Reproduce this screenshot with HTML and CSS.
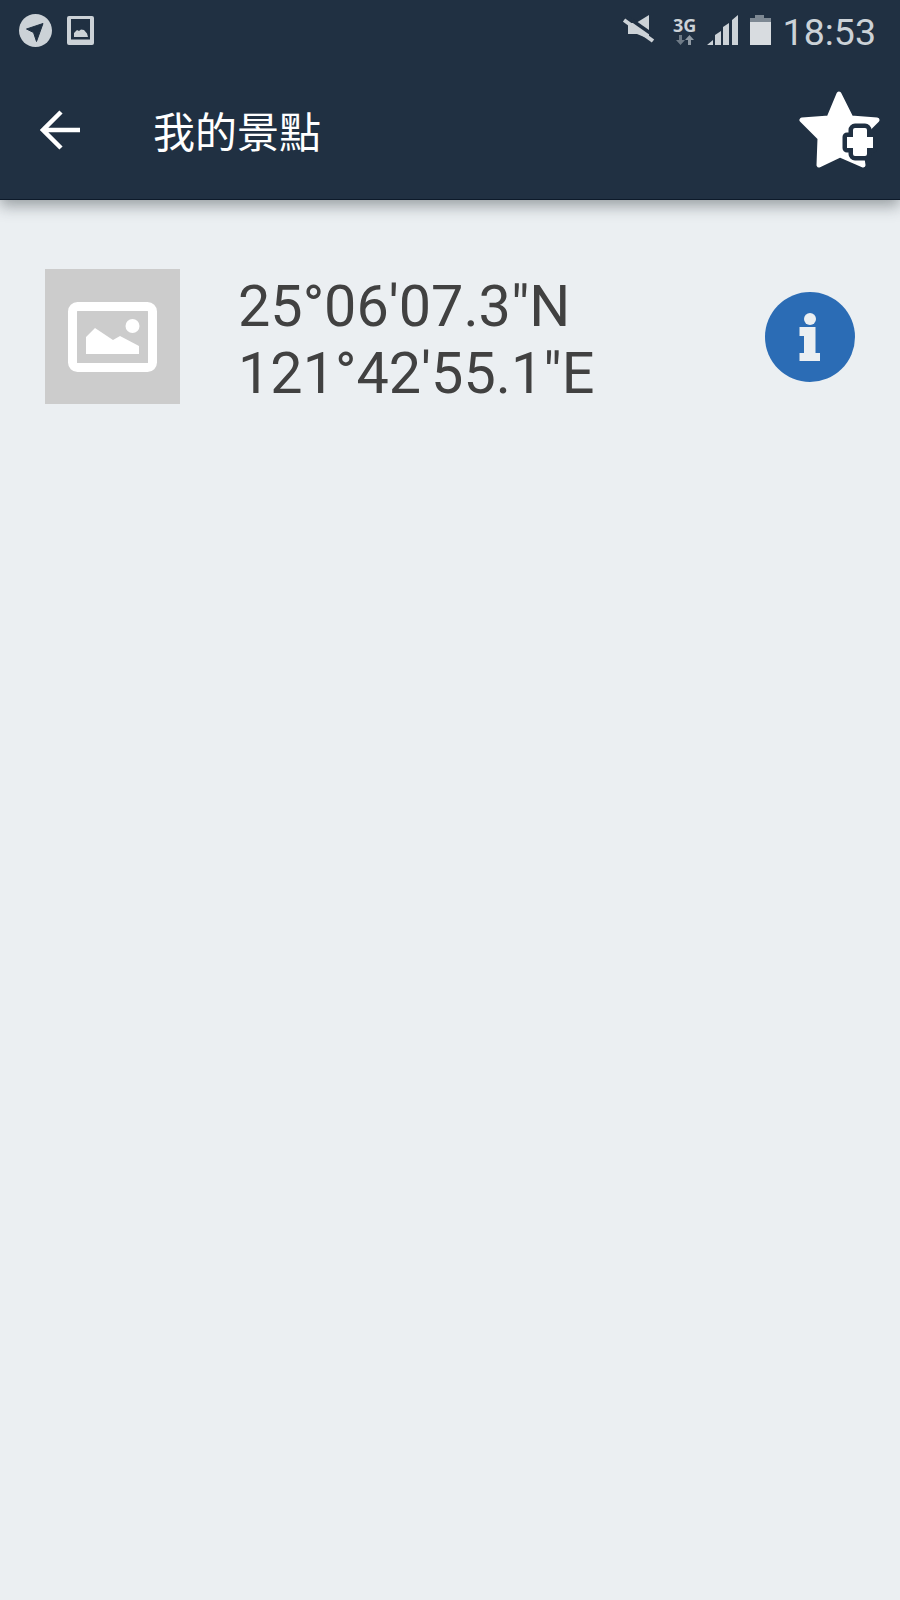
FILE: index.html
```html
<!DOCTYPE html>
<html lang="zh-Hant">
<head>
<meta charset="utf-8">
<title>我的景點</title>
<link rel="stylesheet" href="styles.css">
</head>
<body>
<header class="appbar">
  <div class="status">
    <div class="status-left">
      <svg class="ico-nav" viewBox="0 0 33 33"><circle cx="16.500" cy="16.500" r="16.500" fill="#ccd2d7"/><path d="M7.500 15 24 9.500 17.500 27.500 14.500 18.500z" fill="#203042" stroke="#203042" stroke-width="1" stroke-linejoin="round"/></svg>
      <svg class="ico-gallery" viewBox="0 0 27 29"><path fill-rule="evenodd" d="M2 0h23a2 2 0 0 1 2 2v25a2 2 0 0 1-2 2H2a2 2 0 0 1-2-2V2a2 2 0 0 1 2-2zM4 3v20.500h19V3z" fill="#ccd2d7"/><path d="M7 21v-4l3-3 2 1 2-1.500 3 .5 3 3.500 1 3.500z" fill="#ccd2d7"/></svg>
    </div>
    <div class="status-right">
      <svg class="ico-mute" viewBox="0 0 32 30"><path d="M26 0V24L14 19H5V8H13z" fill="#ccd2d7"/><path d="M3 1 33 22" stroke="#203042" stroke-width="3.500"/><path d="M1 5 30 26" stroke="#ccd2d7" stroke-width="4"/></svg>
      <div class="net">
        <span class="net-label">3G</span>
        <svg class="ico-arrows" viewBox="0 0 18 10"><path d="M3 0h3v5h3l-4.500 5L0 5h3z" fill="#6f7b87"/><path d="M12 10h3V5h3l-4.500-5L9 5h3z" fill="#8f99a3"/></svg>
      </div>
      <svg class="ico-signal" viewBox="0 0 31 30"><path d="M0 30 6 25V30zM8 30V20L14 16V30zM16 30V12L22 8V30zM25 30V5L31 0V30z" fill="#ccd2d7"/></svg>
      <svg class="ico-battery" viewBox="0 0 21 30"><path d="M5 0h9v3h7v5H0V3h5z" fill="#7d8893"/><rect y="7" width="21" height="23" fill="#d8dce0"/></svg>
      <span class="clock">18:53</span>
    </div>
  </div>
  <div class="toolbar">
    <svg class="ico-back" viewBox="0 0 40 40"><path d="M21 2 3 20l18 18M3 20h37" fill="none" stroke="#fff" stroke-width="4.500"/></svg>
    <h1 class="title">我的景點</h1>
    <svg class="ico-star-add" viewBox="0 0 82 78"><path d="M40 3 52 27 78 29 60 47 64 74 41 64 20 74 21 47 3 29 30 27z" fill="#fff" stroke="#fff" stroke-width="5" stroke-linejoin="round"/><path class="plus" d="M54 39a2 2 0 0 1 2-2h10a2 2 0 0 1 2 2v7h6v11h-6v6a2 2 0 0 1-2 2H56a2 2 0 0 1-2-2v-6h-6V46h6z"/></svg>
  </div>
</header>
<main class="list">
  <div class="place">
    <div class="thumb">
      <svg class="ico-picture" viewBox="0 0 89 70"><rect x="4.500" y="4.500" width="80" height="61" rx="5" fill="none" stroke="#fff" stroke-width="9"/><circle cx="64.500" cy="24" r="7" fill="#fff"/><path d="M18 35 27 26l18 12 7-4 19 10v8H18z" fill="#fff"/></svg>
    </div>
    <div class="coords">25°06'07.3"N<br>121°42'55.1"E</div>
    <svg class="ico-info" viewBox="0 0 90 90"><circle cx="45" cy="45" r="45" fill="#2b6cb5"/><circle cx="45" cy="27" r="6" fill="#ebeff2"/><path d="M34.500 35H50.500V61H55V69H34.500V61H39V44H34.500z" fill="#ebeff2"/></svg>
  </div>
</main>
</body>
</html>
```
FILE: styles.css
```css
* { box-sizing: border-box; }

html, body { height: 100%; }

body {
  margin: 0;
  background: #ebeff2;
  font-family: Roboto, "Noto Sans CJK TC", sans-serif;
  overflow: hidden;
}

svg { display: block; flex: none; }

.appbar {
  height: 200px;
  background: #203042;
  border-bottom: 1px solid #0d1a2a;
  box-shadow: 0 6px 14px rgba(40, 50, 55, 0.42);
}

.status {
  height: 60px;
  padding: 0 24px 0 19px;
  display: flex;
  align-items: center;
  justify-content: space-between;
}

.status-left,
.status-right { display: flex; align-items: center; }

.status-left { gap: 15px; }

.ico-nav { width: 33px; height: 33px; }
.ico-gallery { width: 27px; height: 29px; }
.ico-mute { width: 32px; height: 30px; margin-right: 18px; }

.net {
  width: 24px;
  margin-right: 10px;
  display: flex;
  flex-direction: column;
  align-items: center;
}

.net-label {
  font: 700 18px/20px "Noto Sans", sans-serif;
  color: #ccd2d7;
}

.ico-arrows { width: 18px; height: 10px; }
.ico-signal { width: 31px; height: 30px; margin-right: 12px; }
.ico-battery { width: 21px; height: 30px; margin-right: 12px; }

.clock {
  margin-top: 4px;
  font-size: 37.500px;
  line-height: 40px;
  color: #ccd2d7;
}

.toolbar {
  height: 139px;
  padding: 0 19px 0 40px;
  display: flex;
  align-items: center;
}

.ico-back { width: 40px; height: 40px; margin-top: 1px; }

.title {
  flex: 1;
  margin: 0 0 0 73px;
  font: 400 42px/56px "Noto Sans CJK TC", sans-serif;
  color: #fff;
}

.ico-star-add { width: 82px; height: 78px; }

.plus {
  fill: #fff;
  stroke: #203042;
  stroke-width: 9;
  stroke-linejoin: round;
  paint-order: stroke;
}

.list { padding: 69px 45px 0; }

.place {
  height: 135px;
  display: flex;
  align-items: center;
}

.thumb {
  width: 135px;
  height: 135px;
  background: #ccc;
  display: flex;
  align-items: center;
  justify-content: center;
}

.ico-picture { width: 89px; height: 70px; }

.coords {
  flex: 1;
  align-self: flex-start;
  margin: 4px 0 0 58px;
  font-size: 57.500px;
  line-height: 67px;
  color: #414141;
}

.ico-info { width: 90px; height: 90px; }
```
